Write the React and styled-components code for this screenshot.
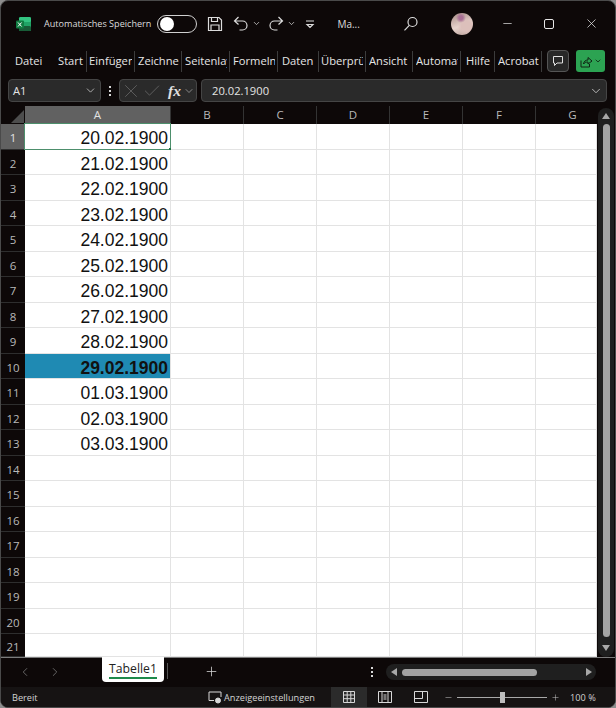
import React from "react";
import styled, { createGlobalStyle } from "styled-components";
import { ChevronDown, ChevronLeft, ChevronRight, Plus, Check, X, Minus } from "lucide-react";

const GlobalStyle = createGlobalStyle`
  html, body {
    margin: 0;
    padding: 0;
    background: #8d8d8d;
    overflow: hidden;
  }
  * { box-sizing: border-box; }
`;

const uiFont = `"Open Sans", "Noto Sans", "Liberation Sans", sans-serif`;

const ribbonTabs = [
  { label: "Datei", width: 43, pad: 14 },
  { label: "Start", width: 43, pad: 14, line: true },
  { label: "Einfügen", width: 48, pad: 2, line: true },
  { label: "Zeichnen", width: 47, pad: 3, line: true },
  { label: "Seitenlayout", width: 48, pad: 3, line: true },
  { label: "Formeln", width: 48, pad: 3, line: true },
  { label: "Daten", width: 41, pad: 4, line: true },
  { label: "Überprüfen", width: 47, pad: 2, line: true },
  { label: "Ansicht", width: 47, pad: 3, line: true },
  { label: "Automate", width: 48, pad: 3, line: true },
  { label: "Hilfe", width: 34, pad: 5, line: true },
  { label: "Acrobat", width: 47, pad: 3, line: true }
];

const dates = [
  "20.02.1900", "21.02.1900", "22.02.1900", "23.02.1900", "24.02.1900",
  "25.02.1900", "26.02.1900", "27.02.1900", "28.02.1900", "29.02.1900",
  "01.03.1900", "02.03.1900", "03.03.1900"
];
const rows = Array.from({ length: 21 }, (_, i) => i + 1);
const otherCols = ["B", "C", "D", "E", "F", "G"];

const Window = styled.div`
  width: 616px;
  height: 708px;
  display: flex;
  flex-direction: column;
  background: #0d0808;
  border: 1px solid #4a4a4a;
  border-radius: 8px;
  overflow: hidden;
  color: #e8e8e8;
  font-family: ${uiFont};
`;

const TitleBar = styled.div`
  height: 45px;
  flex: none;
  display: flex;
  align-items: center;
  padding-left: 15px;
`;

const AppLogo = styled.svg`
  width: 15px;
  height: 16px;
  margin-right: 13px;
`;

const AutoSaveLabel = styled.span`
  font-size: 9.1px;
  color: #dcdcdc;
  white-space: nowrap;
  margin-right: 6px;
`;

const Toggle = styled.div`
  width: 40px;
  height: 18px;
  border: 1px solid #d0d0d0;
  border-radius: 9px;
  padding: 1px 0 0 1px;
  margin-right: 9px;
  flex: none;
  &::before {
    content: "";
    display: block;
    width: 14px;
    height: 14px;
    margin-left: 1px;
    border-radius: 50%;
    background: #fff;
  }
`;

const QuickIcon = styled.svg`
  width: ${p => p.$w || 18}px;
  height: 18px;
  flex: none;
  margin-right: ${p => p.$gap || 0}px;
  fill: none;
  stroke: #dcdcdc;
  stroke-width: 1.2;
`;

const SmallChevron = styled(ChevronDown)`
  width: 9px;
  height: 9px;
  margin-right: ${p => p.$gap || 0}px;
  color: #d8d8d8;
  flex: none;
`;

const FileName = styled.span`
  font-size: 10px;
  color: #dcdcdc;
  margin-left: 22px;
  width: 65px;
  flex: none;
`;

const Avatar = styled.div`
  width: 22px;
  height: 22px;
  border-radius: 50%;
  margin-left: 31px;
  margin-right: 28px;
  flex: none;
  background:
    radial-gradient(circle at 45% 22%, #a86f95 0 2px, transparent 5px),
    radial-gradient(circle at 70% 60%, #dcc0bb 0 5px, transparent 9px),
    linear-gradient(160deg, #a58a84, #e6d3cc 55%, #b79d96);
`;

const WindowButtons = styled.div`
  display: flex;
  align-items: center;
  gap: 28px;
  color: #e6e6e6;
`;

const MaxBox = styled.div`
  width: 10px;
  height: 10px;
  border: 1.2px solid #e6e6e6;
  border-radius: 2px;
  margin: 0 2px;
`;

const Ribbon = styled.div`
  height: 30px;
  flex: none;
  display: flex;
  align-items: center;
`;

const RibbonTab = styled.div`
  height: 21px;
  width: ${p => p.$width}px;
  padding: 0 2px 0 ${p => p.$pad}px;
  flex: none;
  border-right: ${p => (p.$line ? "1px solid #3c3c3c" : "none")};
`;

const RibbonLabel = styled.div`
  line-height: 20px;
  font-size: 11.2px;
  color: #e6e6e6;
  white-space: nowrap;
  overflow: hidden;
`;

const CommentButton = styled.div`
  width: 22px;
  height: 22px;
  margin-left: 5px;
  border: 1px solid #555;
  border-radius: 4px;
  background: #282828;
  display: flex;
  align-items: center;
  justify-content: center;
  flex: none;
`;

const ShareButton = styled.div`
  width: 29px;
  height: 22px;
  margin-left: 7px;
  border-radius: 3px;
  background: #2ca352;
  display: flex;
  align-items: center;
  justify-content: center;
  gap: 1px;
  color: #102414;
  flex: none;
`;

const FormulaRow = styled.div`
  height: 23px;
  margin-top: 3px;
  flex: none;
  display: flex;
  align-items: stretch;
  padding: 0 8px 0 7px;
`;

const FieldBox = styled.div`
  background: #2a2a2a;
  border: 1px solid #454545;
  border-radius: 4px;
  display: flex;
  align-items: center;
  color: #e4e4e4;
  font-size: 11.2px;
`;

const NameBox = styled(FieldBox)`
  width: 93px;
  padding: 0 3px 0 4px;
  justify-content: space-between;
  flex: none;
`;

const Dots = styled.div`
  width: 18px;
  flex: none;
  display: flex;
  flex-direction: column;
  align-items: center;
  justify-content: center;
  gap: 2px;
  & i {
    width: 2px;
    height: 2px;
    background: #d8d8d8;
  }
`;

const FuncBox = styled(FieldBox)`
  width: 78px;
  flex: none;
  color: #6e6e6e;
`;

const Fx = styled.span`
  font-family: "Liberation Serif", serif;
  font-style: italic;
  font-weight: 700;
  font-size: 15.500px;
  color: #e0e0e0;
  margin-left: 6px;
  width: 15px;
  flex: none;
`;

const ValueBox = styled(FieldBox)`
  flex: 1;
  margin-left: 4px;
  padding: 0 3px 0 10px;
  justify-content: space-between;
`;

const SheetArea = styled.div`
  height: 551px;
  flex: none;
  margin-top: 4px;
  display: flex;
`;

const Grid = styled.div`
  width: 596px;
  flex: none;
  display: grid;
  grid-template-columns: 24px 146px 73px 73px 73px 73px 73px 61px;
  grid-template-rows: 18px repeat(20, 25.5px) 23px;
  height: 551px;
`;

const Corner = styled.div`
  background: #0d0808;
  position: relative;
  &::after {
    content: "";
    position: absolute;
    right: 1px;
    bottom: 1px;
    border-style: solid;
    border-width: 0 0 13px 13px;
    border-color: transparent transparent #4d4d4d transparent;
  }
`;

const ColHead = styled.div`
  background: ${p => (p.$active ? "#616161" : "#0d0808")};
  color: ${p => (p.$active ? "#e2e2e2" : "#b9b9b9")};
  border-right: ${p => (p.$clipped ? "none" : "1px solid #333")};
  padding-left: ${p => (p.$clipped ? "12px" : "0")};
  font-size: 11.5px;
  line-height: 18px;
  text-align: center;
`;

const RowHead = styled.div`
  background: ${p => (p.$active ? "#616161" : "#0d0808")};
  color: ${p => (p.$active ? "#e2e2e2" : "#b9b9b9")};
  border-bottom: 1px solid #2e2e2e;
  font-size: 11.5px;
  display: flex;
  align-items: center;
  justify-content: center;
  padding-top: 3px;
`;

const Cell = styled.div`
  position: relative;
  background: ${p => (p.$highlight ? "#1f8ab3" : "#fff")};
  border-right: 1px solid #e3e3e3;
  border-bottom: 1px solid #e3e3e3;
  color: #111;
  font-family: "Liberation Sans", Arial, sans-serif;
  font-size: 17.5px;
  font-weight: ${p => (p.$highlight ? 700 : 400)};
  line-height: 28px;
  text-align: right;
  padding-right: 2px;
  min-width: 0;
  white-space: nowrap;
`;

const SelectionBox = styled.div`
  position: absolute;
  inset: -1px -1px -1px -1px;
  border: 1.5px solid #4d8f6c;
  pointer-events: none;
  &::after {
    content: "";
    position: absolute;
    right: -3px;
    bottom: -3px;
    width: 4px;
    height: 4px;
    background: #217346;
  }
`;

const VScroll = styled.div`
  flex: 1;
  background: #0d0808;
  padding: 2px 1px 0 1px;
`;

const VTrack = styled.div`
  height: 549px;
  border-radius: 9px;
  background: #1f1f1f;
  display: flex;
  flex-direction: column;
  align-items: center;
  padding: 5px 0 6px;
`;

const VThumb = styled.div`
  width: 7px;
  flex: 1;
  margin: 5px 0 8px;
  border-radius: 4px;
  background: #a3a3a3;
`;

const ArrowUp = styled.div`
  border-style: solid;
  border-width: ${p => (p.$down ? "6px 4.5px 0 4.5px" : "0 4.5px 6px 4.5px")};
  border-color: ${p =>
    p.$down
      ? "#a8a8a8 transparent transparent transparent"
      : "transparent transparent #a8a8a8 transparent"};
`;

const ArrowSide = styled.div`
  border-style: solid;
  border-width: ${p => (p.$right ? "4.5px 0 4.5px 6px" : "4.5px 6px 4.5px 0")};
  border-color: ${p =>
    p.$right
      ? "transparent transparent transparent #a8a8a8"
      : "transparent #a8a8a8 transparent transparent"};
`;

const SheetBar = styled.div`
  height: 30px;
  flex: none;
  display: flex;
  align-items: flex-start;
  border-top: 1px solid #7c7c7c;
`;

const NavArrows = styled.div`
  width: 101px;
  height: 28px;
  padding-left: 17px;
  display: flex;
  align-items: center;
  gap: 16px;
  color: #777;
  flex: none;
`;

const SheetTab = styled.div`
  width: 62px;
  height: 25px;
  margin-top: -1px;
  background: #fff;
  border-radius: 0 0 4px 4px;
  color: #222;
  font-size: 12.2px;
  text-align: center;
  line-height: 24px;
  position: relative;
  flex: none;
  &::after {
    content: "";
    position: absolute;
    left: 7px;
    right: 7px;
    bottom: 3px;
    height: 2px;
    background: #1d8a4b;
  }
`;

const TabDivider = styled.div`
  width: 1px;
  height: 16px;
  margin: 5px 0 0 3px;
  background: #555;
  flex: none;
`;

const AddSheet = styled(Plus)`
  width: 15px;
  height: 15px;
  margin: 6px 0 0 36px;
  color: #cfcfcf;
  flex: none;
`;

const SheetDots = styled(Dots)`
  height: 28px;
  margin-left: 146px;
  width: 14px;
`;

const HScroll = styled.div`
  width: 210px;
  height: 16px;
  margin: 6px 0 0 7px;
  border-radius: 8px;
  background: #1f1f1f;
  display: flex;
  align-items: center;
  padding: 0 4px 0 5px;
  flex: none;
`;

const HThumb = styled.div`
  width: 135px;
  height: 7px;
  border-radius: 4px;
  margin-left: 5px;
  margin-right: auto;
  background: #a3a3a3;
`;

const StatusBar = styled.div`
  flex: 1;
  display: flex;
  align-items: center;
  background: #161313;
  padding-left: 11px;
  font-size: 9.2px;
  color: #d4d4d4;
`;

const ReadyLabel = styled.span`
  width: 196px;
  flex: none;
`;

const DisplaySettings = styled.div`
  display: flex;
  align-items: center;
  gap: 2px;
  width: 123px;
  flex: none;
  white-space: nowrap;
`;

const ViewButton = styled.div`
  width: 36px;
  height: 20px;
  display: flex;
  align-items: center;
  justify-content: center;
  flex: none;
  background: ${p => (p.$active ? "#2b2b2b" : "transparent")};
`;

const ViewIcon = styled.svg`
  width: 14px;
  height: 14px;
  fill: none;
  stroke: #d8d8d8;
  stroke-width: 1;
`;

const Zoom = styled.div`
  display: flex;
  align-items: center;
  margin-left: 5px;
  color: #d0d0d0;
`;

const ZoomTrack = styled.div`
  width: 90px;
  height: 1px;
  background: #a8a8a8;
  margin: 0 4px;
  position: relative;
`;

const ZoomKnob = styled.div`
  position: absolute;
  left: 43px;
  top: -5px;
  width: 5px;
  height: 11px;
  background: #bdbdbd;
`;

const ZoomValue = styled.span`
  margin-left: 10px;
  white-space: nowrap;
`;

export default function App() {
  return (
    <Window>
      <GlobalStyle />
      <TitleBar>
        <AppLogo viewBox="0 0 15 16">
          <rect x="3" y="1" width="12" height="14" rx="1.5" fill="#21a366" />
          <rect x="3" y="1" width="12" height="5" rx="1.5" fill="#33c481" />
          <rect x="3" y="10" width="12" height="5" rx="1.5" fill="#185c37" />
          <rect x="0" y="4.5" width="8" height="8" rx="1" fill="#107c41" />
          <path d="M2 6.5l3.6 4M5.6 6.5L2 10.5" stroke="#fff" strokeWidth="1" />
        </AppLogo>
        <AutoSaveLabel>Automatisches Speichern</AutoSaveLabel>
        <Toggle />
        <QuickIcon viewBox="0 0 18 18" $gap={8}>
          <path d="M2.500 2.500h10.500l2.500 2.500v10.500h-13z" />
          <path d="M5.500 2.500v4h6v-4M5 15.500v-5.500h8v5.500" />
        </QuickIcon>
        <QuickIcon viewBox="0 0 18 18" $gap={2}>
          <path d="M6.500 2l-4 4 4 3.500M2.500 6h8a4.500 4.500 0 0 1 0 9h-3" />
        </QuickIcon>
        <SmallChevron $gap={6} />
        <QuickIcon viewBox="0 0 18 18" $gap={2}>
          <path d="M11.500 2l4 4-4 3.500M15.500 6h-8a4.500 4.500 0 0 0 0 9h3" />
        </QuickIcon>
        <SmallChevron $gap={9} />
        <QuickIcon viewBox="0 0 10 18" $w={10}>
          <path d="M1 6h8M2 9.500h6l-3 3z" />
        </QuickIcon>
        <FileName>Ma...</FileName>
        <QuickIcon viewBox="0 0 18 18">
          <circle cx="10.500" cy="7" r="4.500" />
          <path d="M7.300 10.300l-4.800 5" />
        </QuickIcon>
        <Avatar />
        <WindowButtons>
          <Minus size={13} strokeWidth={1.3} />
          <MaxBox />
          <X size={15} strokeWidth={1.2} />
        </WindowButtons>
      </TitleBar>

      <Ribbon>
        {ribbonTabs.map(tab => (
          <RibbonTab key={tab.label} $width={tab.width} $pad={tab.pad} $line={tab.line}>
            <RibbonLabel>{tab.label}</RibbonLabel>
          </RibbonTab>
        ))}
        <CommentButton>
          <svg width="12" height="12" viewBox="0 0 12 12" fill="none" stroke="#e0e0e0" strokeWidth="1">
            <path d="M1.500 1.500h9v6.500h-5.500l-2.500 2.500v-2.500h-1z" />
          </svg>
        </CommentButton>
        <ShareButton>
          <svg width="13" height="13" viewBox="0 0 13 13" fill="none" stroke="#102414" strokeWidth="1">
            <path d="M1 5.500v6.500h8.500v-3M3.500 9c.3-2.500 2-4 4.500-4V2.500l4 3.500-4 3V7c-1.800 0-3.500.5-4.500 2z" />
          </svg>
          <ChevronDown size={8} strokeWidth={2.5} />
        </ShareButton>
      </Ribbon>

      <FormulaRow>
        <NameBox>
          A1
          <ChevronDown size={13} strokeWidth={1.5} color="#c8c8c8" />
        </NameBox>
        <Dots>
          <i />
          <i />
          <i />
        </Dots>
        <FuncBox>
          <X size={22} strokeWidth={0.8} />
          <Check size={20} strokeWidth={0.9} />
          <Fx>fx</Fx>
          <ChevronDown size={12} strokeWidth={1.3} color="#b8b8b8" />
        </FuncBox>
        <ValueBox>
          20.02.1900
          <ChevronDown size={14} strokeWidth={1.5} color="#c8c8c8" />
        </ValueBox>
      </FormulaRow>

      <SheetArea>
        <Grid>
          <Corner />
          <ColHead $active>A</ColHead>
          {otherCols.map(col => (
            <ColHead key={col} $clipped={col === "G"}>{col}</ColHead>
          ))}
          {rows.map(row => (
            <React.Fragment key={row}>
              <RowHead $active={row === 1}>{row}</RowHead>
              <Cell $highlight={row === 10}>
                {dates[row - 1]}
                {row === 1 && <SelectionBox />}
              </Cell>
              {otherCols.map(col => (
                <Cell key={col} />
              ))}
            </React.Fragment>
          ))}
        </Grid>
        <VScroll>
          <VTrack>
            <ArrowUp />
            <VThumb />
            <ArrowUp $down />
          </VTrack>
        </VScroll>
      </SheetArea>

      <SheetBar>
        <NavArrows>
          <ChevronLeft size={14} strokeWidth={1.4} />
          <ChevronRight size={14} strokeWidth={1.4} />
        </NavArrows>
        <SheetTab>Tabelle1</SheetTab>
        <TabDivider />
        <AddSheet strokeWidth={1.3} />
        <SheetDots>
          <i />
          <i />
          <i />
        </SheetDots>
        <HScroll>
          <ArrowSide />
          <HThumb />
          <ArrowSide $right />
        </HScroll>
      </SheetBar>

      <StatusBar>
        <ReadyLabel>Bereit</ReadyLabel>
        <DisplaySettings>
          <svg width="14" height="13" viewBox="0 0 14 13" fill="none" stroke="#d8d8d8" strokeWidth="1">
            <path d="M6 9.500H1V1h12v5" />
            <circle cx="10" cy="9.500" r="2.500" fill="#d8d8d8" />
          </svg>
          Anzeigeeinstellungen
        </DisplaySettings>
        <ViewButton $active>
          <ViewIcon viewBox="0 0 14 14">
            <path d="M1.500 1.500h11v11h-11zM1.500 5h11M1.500 8.700h11M5.200 1.500v11M8.800 1.500v11" />
          </ViewIcon>
        </ViewButton>
        <ViewButton>
          <ViewIcon viewBox="0 0 14 14">
            <path d="M.5 1.500h13v11H.5zM4 1.500v11M10 1.500v11M5.500 5h3M5.500 7h3M5.500 9h3" />
          </ViewIcon>
        </ViewButton>
        <ViewButton>
          <ViewIcon viewBox="0 0 14 14">
            <path d="M.5 1.500h13v11H.5zM.5 8.500h8v-7" />
          </ViewIcon>
        </ViewButton>
        <Zoom>
          <Minus size={9} strokeWidth={1.3} />
          <ZoomTrack>
            <ZoomKnob />
          </ZoomTrack>
          <Plus size={9} strokeWidth={1.3} />
          <ZoomValue>100 %</ZoomValue>
        </Zoom>
      </StatusBar>
    </Window>
  );
}
